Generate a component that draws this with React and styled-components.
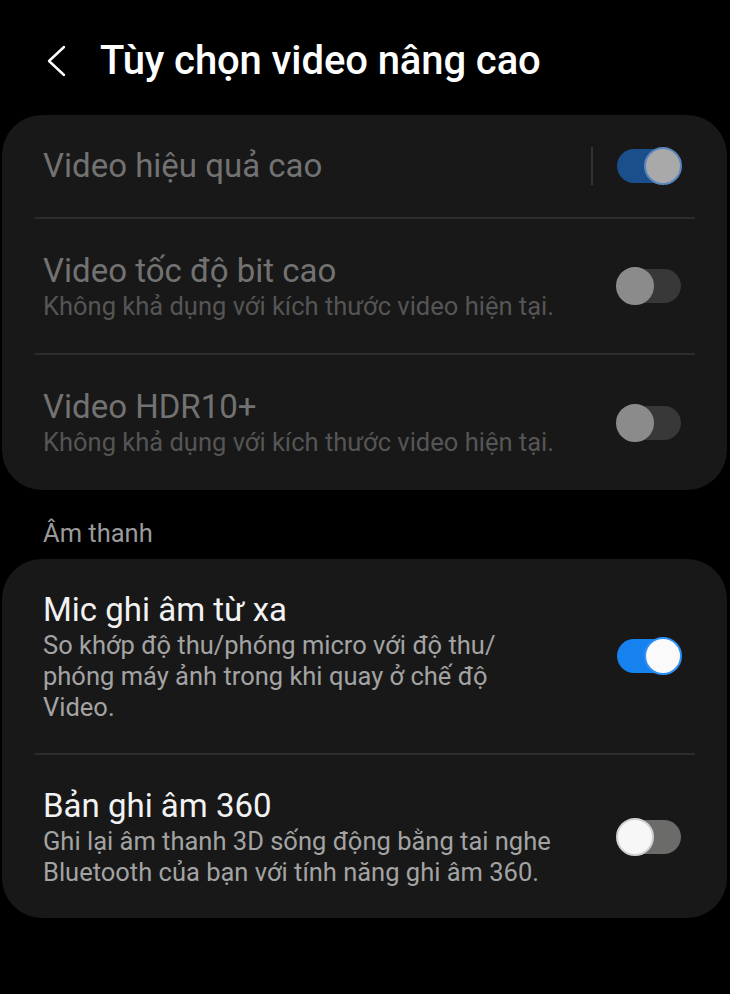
import styled, { createGlobalStyle } from "styled-components";

const GlobalStyle = createGlobalStyle`
  html, body {
    margin: 0;
    padding: 0;
    background: #000;
  }
  body {
    font-family: Roboto, "Noto Sans", sans-serif;
    -webkit-font-smoothing: antialiased;
  }
`;

const Page = styled.div`
  width: 730px;
  height: 994px;
  background: #000;
  padding: 0 3px 0 2px;
  box-sizing: border-box;
  overflow: hidden;
`;

const Header = styled.header`
  height: 115px;
  display: flex;
  align-items: center;
  padding-left: 44px;
  padding-top: 6px;
  box-sizing: border-box;
`;

const BackButton = styled.button`
  background: none;
  border: none;
  padding: 0;
  width: 22px;
  height: 32px;
  display: flex;
  align-items: center;
  cursor: pointer;
`;

const Title = styled.h1`
  margin: 0 0 0 32px;
  color: #fff;
  font-size: 40px;
  font-weight: 500;
  letter-spacing: -0.1px;
`;

const Card = styled.section`
  background: #181818;
  border-radius: 40px;
`;

const Row = styled.div`
  min-height: ${(p) => p.$h}px;
  display: flex;
  align-items: center;
  padding: 0 46px 0 41px;
  box-sizing: border-box;
`;

const Divider = styled.div`
  height: 2px;
  background: #2c2c2c;
  margin: 0 32px 0 33px;
`;

const TextBlock = styled.div`
  flex: 1;
  display: flex;
  flex-direction: column;
`;

const RowTitle = styled.div`
  font-size: 33px;
  line-height: 40px;
  color: ${(p) => (p.$disabled ? "#727272" : "#f2f2f2")};
`;

const RowSub = styled.div`
  font-size: 25.5px;
  line-height: 31px;
  color: ${(p) => (p.$disabled ? "#555" : "#a3a3a3")};
  max-width: 522px;
`;

const VSep = styled.div`
  width: 2px;
  height: 38px;
  background: #333;
  margin-right: 24px;
`;

const Track = styled.div`
  position: relative;
  width: 64px;
  height: 34px;
  border-radius: 17px;
  background: ${(p) => p.$track};
`;

const Thumb = styled.div`
  position: absolute;
  top: -2px;
  left: ${(p) => (p.$on ? "27px" : "-1px")};
  width: 34px;
  height: 34px;
  border-radius: 50%;
  background: ${(p) => p.$thumb};
  border: 2px solid ${(p) => p.$ring};
`;

const SectionLabel = styled.div`
  color: #9a9a9a;
  font-size: 25.5px;
  padding: 28px 0 0 41px;
  height: 69px;
  box-sizing: border-box;
  line-height: 30px;
`;

const toggleColors = {
  dimOn: { track: "#1b4f8c", thumb: "#a9a9a9", ring: "#5a86bd" },
  dimOff: { track: "#383838", thumb: "#8b8b8b", ring: "#8b8b8b" },
  on: { track: "#1682f0", thumb: "#fafafa", ring: "#2e8ff5" },
  off: { track: "#6b6b69", thumb: "#f7f7f7", ring: "#d0d0d0" },
};

const Toggle = ({ on, kind }) => {
  const c = toggleColors[kind];
  return (
    <Track $track={c.track}>
      <Thumb $on={on} $thumb={c.thumb} $ring={c.ring} />
    </Track>
  );
};

const Setting = ({ h, title, sub, disabled, on, kind, sep }) => (
  <Row $h={h}>
    <TextBlock>
      <RowTitle $disabled={disabled}>{title}</RowTitle>
      {sub && <RowSub $disabled={disabled}>{sub}</RowSub>}
    </TextBlock>
    {sep && <VSep />}
    <Toggle on={on} kind={kind} />
  </Row>
);

const unavailable = "Không khả dụng với kích thước video hiện tại.";

export default function App() {
  return (
    <>
      <GlobalStyle />
      <Page>
        <Header>
          <BackButton aria-label="Quay lại">
            <svg width="22" height="32" viewBox="0 0 22 32">
              <polyline
                points="18,2 3,16 18,30"
                fill="none"
                stroke="#fff"
                strokeWidth="2.4"
                strokeLinecap="round"
                strokeLinejoin="round"
              />
            </svg>
          </BackButton>
          <Title>Tùy chọn video nâng cao</Title>
        </Header>

        <Card>
          <Setting h={102} title="Video hiệu quả cao" disabled on kind="dimOn" sep />
          <Divider />
          <Setting h={134} title="Video tốc độ bit cao" sub={unavailable} disabled kind="dimOff" />
          <Divider />
          <Setting h={135} title="Video HDR10+" sub={unavailable} disabled kind="dimOff" />
        </Card>

        <SectionLabel>Âm thanh</SectionLabel>

        <Card>
          <Setting
            h={194}
            title="Mic ghi âm từ xa"
            sub={
              <>
                So khớp độ thu/phóng micro với độ thu/<wbr />phóng máy ảnh trong khi quay ở chế độ Video.
              </>
            }
            on
            kind="on"
          />
          <Divider />
          <Setting
            h={163}
            title="Bản ghi âm 360"
            sub="Ghi lại âm thanh 3D sống động bằng tai nghe Bluetooth của bạn với tính năng ghi âm 360."
            kind="off"
          />
        </Card>
      </Page>
    </>
  );
}
